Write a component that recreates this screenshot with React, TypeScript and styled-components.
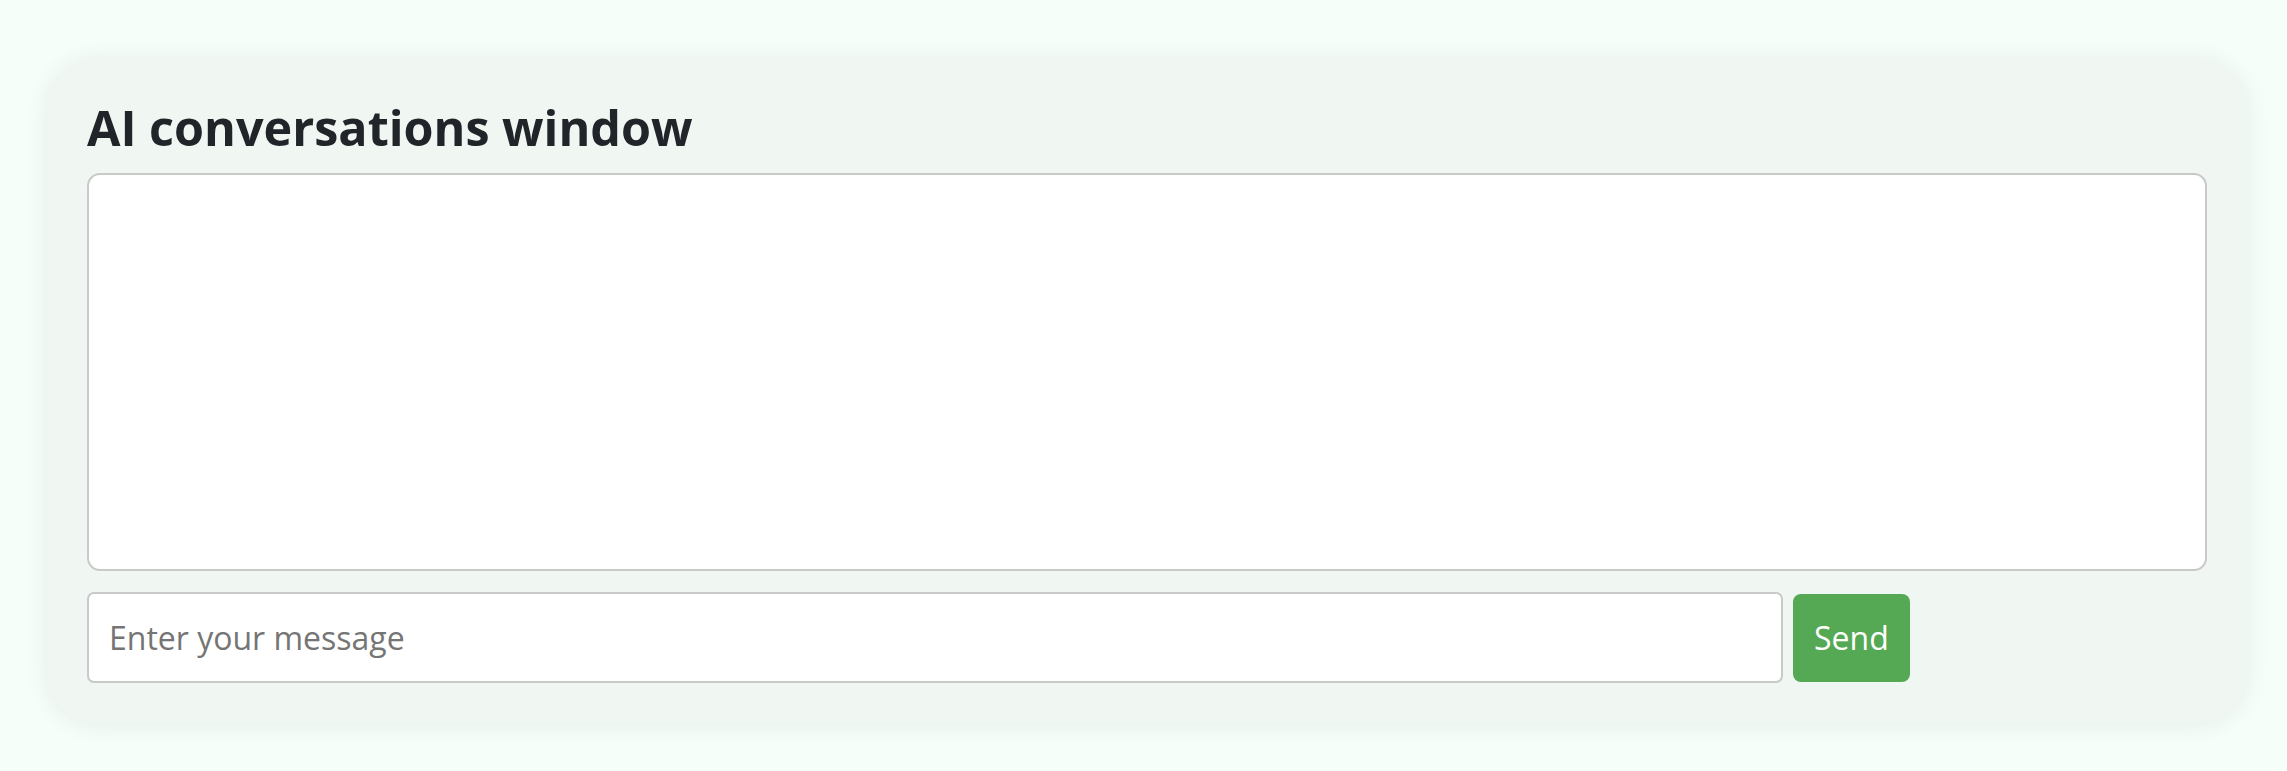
import React from "react";
import styled, { createGlobalStyle } from "styled-components";

const GlobalStyle = createGlobalStyle`
  html, body {
    margin: 0;
    padding: 0;
    background: #f6fef9;
  }
  body {
    font-family: "Open Sans", "Noto Sans", "Liberation Sans", sans-serif;
    color: #212529;
  }
  * { box-sizing: border-box; }
`;

const Page = styled.div`
  padding: 58px 40px 40px 47px;
`;

const Card = styled.section`
  background: #f0f6f2;
  border-radius: 50px;
  padding: 40px;
  box-shadow: 0 2px 24px rgba(0, 0, 0, 0.07);
  display: flex;
  flex-direction: column;
`;

const Title = styled.h2`
  margin: 0 0 16px 0;
  font-size: 48.5px;
  line-height: 59px;
  font-weight: 700;
  color: #212529;
`;

const Messages = styled.div`
  height: 398px;
  background: #ffffff;
  border: 2px solid #c9c9c9;
  border-radius: 13px;
  overflow-y: auto;
  margin-bottom: 21px;
`;

const InputRow = styled.div`
  display: flex;
  align-items: center;
  gap: 10px;
`;

const MessageInput = styled.input`
  width: 80%;
  height: 91px;
  padding: 0 20px;
  font-family: inherit;
  font-size: 32px;
  color: #212529;
  background: #ffffff;
  border: 2px solid #c9c9c9;
  border-radius: 7px;
  outline: none;
  &::placeholder {
    color: #757575;
  }
`;

const SendButton = styled.button`
  height: 88px;
  padding: 0 21px;
  font-family: inherit;
  font-size: 32px;
  color: #ffffff;
  background: #55a854;
  border: none;
  border-radius: 8px;
  cursor: pointer;
`;

export default function App() {
  return (
    <>
      <GlobalStyle />
      <Page>
        <Card>
          <Title>AI conversations window</Title>
          <Messages />
          <InputRow>
            <MessageInput placeholder="Enter your message" />
            <SendButton>Send</SendButton>
          </InputRow>
        </Card>
      </Page>
    </>
  );
}
